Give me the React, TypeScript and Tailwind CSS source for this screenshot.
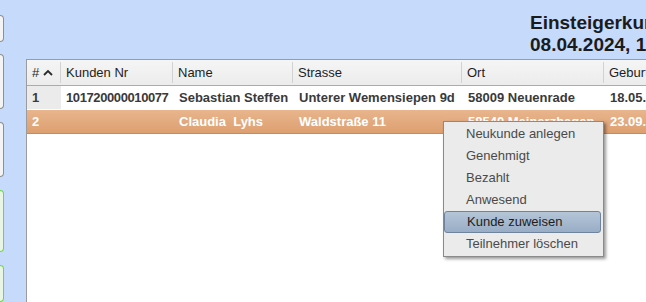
import React from 'react'

type Row = {
  nr: string
  kunde: string
  name: string
  strasse: string
  ort: string
  geburt: string
}

const rows: Row[] = [
  { nr: '1', kunde: '101720000010077', name: 'Sebastian Steffen', strasse: 'Unterer Wemensiepen 9d', ort: '58009 Neuenrade', geburt: '18.05.1987' },
  { nr: '2', kunde: '', name: 'Claudia\u00a0\u00a0Lyhs', strasse: 'Waldstraße 11', ort: '58540 Meinerzhagen', geburt: '23.09.1979' },
]

const menuItems = ['Neukunde anlegen', 'Genehmigt', 'Bezahlt', 'Anwesend', 'Kunde zuweisen', 'Teilnehmer löschen']

const SideButton: React.FC<{ h: string; green?: boolean }> = ({ h, green }) => (
  <div
    className={`${h} w-[4px] rounded-r-[4px] border border-l-0 ${
      green ? 'border-[#6cd748] bg-[#e9f6e3]' : 'border-[#8e8e8e] bg-[#f4f4f4]'
    }`}
  />
)

const HeaderCell: React.FC<{ w: string; children: React.ReactNode; last?: boolean }> = ({ w, children, last }) => (
  <div className={`${w} flex h-full shrink-0 items-center py-[2px]`}>
    <div className={`flex h-full flex-1 items-center whitespace-nowrap pl-[5px] ${last ? '' : 'border-r border-[#d2d2d2]'}`}>
      {children}
    </div>
  </div>
)

const App: React.FC = () => {
  return (
    <div className="relative flex h-[302px] w-[646px] overflow-hidden bg-[#c6dafc] font-['Liberation_Sans',Arial,sans-serif] text-[13px]">
      {/* left button strip */}
      <div className="flex w-[26px] shrink-0 flex-col pt-[15px]">
        <SideButton h="h-[29px]" />
        <div className="h-[13px]" />
        <SideButton h="h-[58px]" />
        <div className="h-[14px]" />
        <SideButton h="h-[59px]" />
        <div className="h-[14px]" />
        <SideButton h="h-[67px]" green />
        <div className="h-[13px]" />
        <SideButton h="h-[40px]" green />
      </div>

      <div className="flex min-w-0 flex-1 flex-col">
        {/* title */}
        <div className="h-[59px] shrink-0 overflow-hidden whitespace-nowrap pl-[504px] pt-[12px] text-[19px] font-bold leading-[22px] text-[#1b1b1b]">
          <div>Einsteigerkurs</div>
          <div>08.04.2024, 18:00</div>
        </div>

        {/* table */}
        <div className="flex-1 overflow-hidden border-l border-t border-[#9c9c9c] bg-white">
          <div className="flex h-[26px] border-b border-[#ababab] bg-gradient-to-b from-[#f5f5f5] to-[#ececec] text-[#1e1e1e]">
            <HeaderCell w="w-[34px]">
              <span>#</span>
              <svg className="ml-[4px]" width="10" height="7" viewBox="0 0 10 7">
                <path d="M1 6 L5 2 L9 6" fill="none" stroke="#2a2a2a" strokeWidth="1.8" />
              </svg>
            </HeaderCell>
            <HeaderCell w="w-[112px]">Kunden Nr</HeaderCell>
            <HeaderCell w="w-[120px]">Name</HeaderCell>
            <HeaderCell w="w-[169px]">Strasse</HeaderCell>
            <HeaderCell w="w-[142px]">Ort</HeaderCell>
            <HeaderCell w="w-[80px]" last>Geburtsdatum</HeaderCell>
          </div>

          {rows.map((r, i) => {
            const sel = i === 1
            return (
              <div
                key={r.nr}
                className={`flex whitespace-nowrap font-bold ${
                  sel
                    ? 'mt-[1px] h-[24px] border-b border-[#c98a58] bg-gradient-to-b from-[#e9b58d] to-[#dd9f70] text-white'
                    : 'h-[23px] text-[#3a3a3a]'
                }`}
              >
                <div className={`flex w-[34px] shrink-0 items-center pl-[5px] ${sel ? '' : 'bg-[#ebebeb]'}`}>{r.nr}</div>
                <div className="flex w-[112px] shrink-0 items-center pl-[5px] tracking-[-0.4px]">{r.kunde}</div>
                <div className="flex w-[120px] shrink-0 items-center pl-[6px]">{r.name}</div>
                <div className="flex w-[169px] shrink-0 items-center pl-[6px]">{r.strasse}</div>
                <div className="flex w-[142px] shrink-0 items-center pl-[6px]">{r.ort}</div>
                <div className="flex w-[80px] shrink-0 items-center pl-[6px]">{r.geburt}</div>
              </div>
            )
          })}
        </div>
      </div>

      {/* context menu */}
      <div className="absolute left-[443px] top-[121px] flex w-[161px] flex-col border border-[#8a8a8a] bg-[#ebebeb] py-[1px] pr-[2px] shadow-[2px_2px_3px_rgba(0,0,0,0.4)]">
        {menuItems.map((m) => {
          const active = m === 'Kunde zuweisen'
          return (
            <div
              key={m}
              className={`flex h-[22px] items-center whitespace-nowrap pl-[22px] ${
                active
                  ? 'rounded-[3px] border border-[#6f839c] bg-gradient-to-b from-[#b5c5d8] to-[#98adc6] pl-[21px] text-[#1d1d1d]'
                  : 'text-[#4a4a4a]'
              }`}
            >
              {m}
            </div>
          )
        })}
      </div>
    </div>
  )
}

export default App
